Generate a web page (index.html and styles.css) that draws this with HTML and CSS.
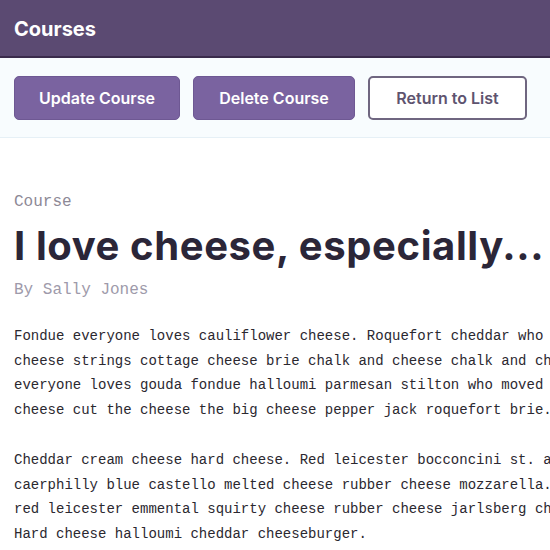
FILE: index.html
```html
<!DOCTYPE html>
<html lang="en">
<head>
<meta charset="utf-8">
<title>Courses</title>
<link rel="stylesheet" href="styles.css">
</head>
<body>
<header class="topbar">
  <h1 class="brand">Courses</h1>
</header>
<nav class="actions">
  <a class="btn btn-primary" href="#">Update Course</a>
  <a class="btn btn-primary" href="#">Delete Course</a>
  <a class="btn btn-outline" href="#">Return to List</a>
</nav>
<main class="detail">
  <p class="eyebrow">Course</p>
  <h2 class="title">I love cheese, especially...</h2>
  <p class="byline">By Sally Jones</p>
  <div class="body">
    <p>Fondue everyone loves cauliflower cheese. Roquefort cheddar who moved my cheese<br>cheese strings cottage cheese brie chalk and cheese chalk and cheese feta<br>everyone loves gouda fondue halloumi parmesan stilton who moved my cheese<br>cheese cut the cheese the big cheese pepper jack roquefort brie.</p>
    <p>Cheddar cream cheese hard cheese. Red leicester bocconcini st. agur blue<br>caerphilly blue castello melted cheese rubber cheese mozzarella. Parmesan<br>red leicester emmental squirty cheese rubber cheese jarlsberg cheddar<br>Hard cheese halloumi cheddar cheeseburger.</p>
  </div>
</main>
</body>
</html>
```
FILE: styles.css
```css
* { box-sizing: border-box; }
html, body { margin: 0; padding: 0; }
body {
  background: #ffffff;
  font-family: "Inter", "Open Sans", sans-serif;
  overflow: hidden;
}
.topbar {
  background: #5b4a72;
  height: 58px;
  border-bottom: 2px solid #3a2b4c;
  display: flex;
  align-items: center;
  padding: 2px 14px 0;
}
.brand {
  margin: 0;
  color: #ffffff;
  font-size: 20px;
  font-weight: 700;
}
.actions {
  background: #f8fcfe;
  border-bottom: 1px solid #e6f0f6;
  height: 80px;
  display: flex;
  align-items: center;
  gap: 13px;
  padding: 0 14px;
}
.btn {
  display: flex;
  align-items: center;
  justify-content: center;
  height: 44px;
  border-radius: 5px;
  font-size: 16px;
  font-weight: 600;
  text-decoration: none;
}
.btn-primary {
  background: #7a63a0;
  color: #ffffff;
  border: 1px solid #6e5893;
}
.btn-primary:nth-child(1) { width: 166px; }
.btn-primary:nth-child(2) { width: 162px; }
.btn-outline {
  width: 159px;
  background: #ffffff;
  color: #5e536f;
  border: 2px solid #6f6680;
}
.detail {
  padding: 54px 14px 0;
}
.eyebrow {
  margin: 0;
  font-family: "Liberation Mono", monospace;
  font-size: 16px;
  line-height: 20px;
  color: #8d8996;
}
.title {
  margin: 10px 0 0;
  font-size: 40px;
  line-height: 48px;
  font-weight: 700;
  color: #2b2638;
  white-space: nowrap;
  letter-spacing: 0.6px;
}
.byline {
  margin: 10px 0 0;
  font-family: "Liberation Mono", monospace;
  font-size: 16px;
  line-height: 20px;
  color: #9e9aaa;
}
.body {
  margin-top: 24px;
  font-family: "Liberation Mono", monospace;
  font-size: 14px;
  line-height: 24.5px;
  color: #2b2830;
  white-space: nowrap;
}
.body p { margin: 0 0 26px; }
```
